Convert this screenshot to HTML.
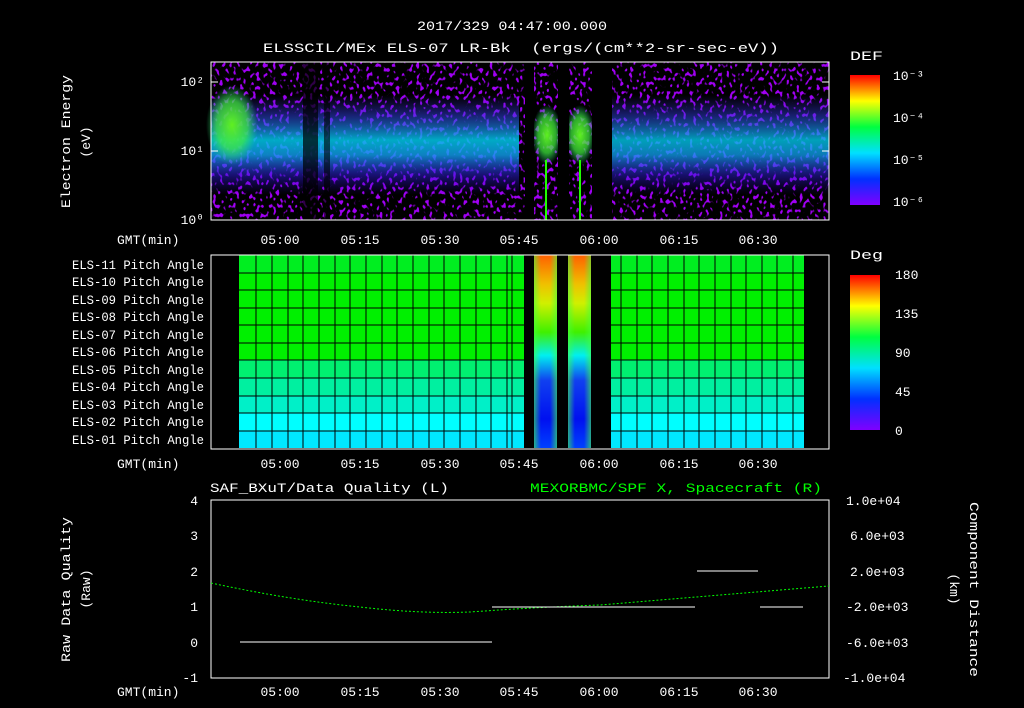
<!DOCTYPE html>
<html><head><meta charset="utf-8"><style>
html,body{margin:0;padding:0;background:#000;}
svg{display:block}
text{font-family:"Liberation Mono","DejaVu Sans Mono",monospace;fill:#fff;font-size:13px}
</style></head><body>
<svg width="1024" height="708" viewBox="0 0 1024 708" xmlns="http://www.w3.org/2000/svg">
<defs>
<linearGradient id="band" x1="0" y1="0" x2="0" y2="1">
<stop offset="0" stop-color="#4020d0" stop-opacity="0"/>
<stop offset="0.2" stop-color="#3040e0" stop-opacity="0.6"/>
<stop offset="0.45" stop-color="#00c8e8"/>
<stop offset="0.6" stop-color="#10a0f0" stop-opacity="0.95"/>
<stop offset="0.8" stop-color="#3020e0" stop-opacity="0.6"/>
<stop offset="1" stop-color="#3000c0" stop-opacity="0"/>
</linearGradient>
<linearGradient id="def" x1="0" y1="1" x2="0" y2="0">
<stop offset="0" stop-color="#8000ff"/><stop offset="0.2" stop-color="#0030ff"/>
<stop offset="0.4" stop-color="#00e0ff"/><stop offset="0.6" stop-color="#00ff40"/>
<stop offset="0.8" stop-color="#ffff00"/><stop offset="1" stop-color="#ff0000"/>
</linearGradient>
<linearGradient id="gapc" x1="0" y1="0" x2="0" y2="1">
<stop offset="0" stop-color="#ff6000"/><stop offset="0.15" stop-color="#f0c000"/><stop offset="0.25" stop-color="#d0f000"/>
<stop offset="0.4" stop-color="#40f000"/><stop offset="0.52" stop-color="#00f0f0"/>
<stop offset="0.65" stop-color="#1040f0"/><stop offset="0.85" stop-color="#0010f0"/>
<stop offset="1" stop-color="#0040ff"/>
</linearGradient>
<linearGradient id="gaph" x1="0" y1="0" x2="1" y2="0">
<stop offset="0" stop-color="#40ff40" stop-opacity="0.6"/><stop offset="0.3" stop-color="#40ff40" stop-opacity="0"/>
<stop offset="0.7" stop-color="#40ff40" stop-opacity="0"/><stop offset="1" stop-color="#40ff40" stop-opacity="0.6"/>
</linearGradient>
<radialGradient id="blob"><stop offset="0" stop-color="#60f020" stop-opacity="1"/><stop offset="0.6" stop-color="#40f040" stop-opacity="0.7"/><stop offset="1" stop-color="#20e080" stop-opacity="0"/></radialGradient>
<filter id="noise" x="0" y="0" width="100%" height="100%">
<feTurbulence type="fractalNoise" baseFrequency="0.3 0.22" numOctaves="1" seed="5"/>
<feColorMatrix type="matrix" values="0 0 0 0 0.35  0 0 0 0 0.0  0 0 0 0 0.9  0 0 0 10 -5.6"/>
</filter>
</defs>

<text x="417" y="30" font-size="16" textLength="190" lengthAdjust="spacingAndGlyphs">2017/329 04:47:00.000</text>
<text x="263" y="52" font-size="16" textLength="516" lengthAdjust="spacingAndGlyphs" xml:space="preserve">ELSSCIL/MEx ELS-07 LR-Bk  (ergs/(cm**2-sr-sec-eV))</text>

<rect x="211" y="62" width="618" height="158" filter="url(#noise)"/>
<rect x="211" y="95" width="308" height="100" fill="url(#band)" opacity="0.85"/>
<rect x="612" y="95" width="217" height="100" fill="url(#band)" opacity="0.8"/>
<ellipse cx="232" cy="125" rx="26" ry="40" fill="url(#blob)"/>
<ellipse cx="547" cy="135" rx="15" ry="30" fill="url(#blob)"/>
<ellipse cx="580" cy="135" rx="15" ry="30" fill="url(#blob)"/>
<rect x="545" y="160" width="2" height="60" fill="#20ff00"/>
<rect x="579" y="160" width="2" height="60" fill="#20ff00"/>
<rect x="303" y="62" width="15" height="158" fill="#000" opacity="0.7"/>
<rect x="324" y="62" width="6" height="158" fill="#000" opacity="0.6"/>
<rect x="525" y="62" width="9" height="158" fill="#000"/>
<rect x="558" y="62" width="11" height="158" fill="#000"/>
<rect x="592" y="62" width="20" height="158" fill="#000"/>
<rect x="211" y="62" width="618" height="158" fill="none" stroke="#fff"/>
<g stroke="#fff">
<line x1="211" y1="82" x2="218" y2="82"/><line x1="211" y1="151" x2="218" y2="151"/>
<line x1="822" y1="82" x2="829" y2="82"/><line x1="822" y1="151" x2="829" y2="151"/>
</g>
<text x="204" y="86" text-anchor="end" font-size="12">10²</text>
<text x="204" y="155" text-anchor="end" font-size="12">10¹</text>
<text x="204" y="224" text-anchor="end" font-size="12">10⁰</text>
<text transform="translate(70,208) rotate(-90)" font-size="15" textLength="133" lengthAdjust="spacingAndGlyphs">Electron Energy</text>
<text transform="translate(90,142) rotate(-90)" text-anchor="middle" font-size="15">(eV)</text>
<g text-anchor="middle">
<text x="280" y="244">05:00</text><text x="360" y="244">05:15</text><text x="440" y="244">05:30</text>
<text x="519" y="244">05:45</text><text x="599" y="244">06:00</text><text x="679" y="244">06:15</text><text x="758" y="244">06:30</text>
</g>
<text x="117" y="244" font-size="12">GMT(min)</text>
<text x="850" y="60" font-size="16" textLength="33" lengthAdjust="spacingAndGlyphs">DEF</text>
<rect x="850" y="75" width="30" height="130" fill="url(#def)"/>
<text x="893" y="80" font-size="15">10⁻³</text><text x="893" y="122" font-size="15">10⁻⁴</text>
<text x="893" y="164" font-size="15">10⁻⁵</text><text x="893" y="206" font-size="15">10⁻⁶</text>

<rect x="239" y="255" width="565" height="193" fill="#00f000"/>
<rect x="239" y="255" width="565" height="18" fill="#00ee20"/>
<rect x="239" y="360" width="565" height="18" fill="#00f070"/>
<rect x="239" y="378" width="565" height="18" fill="#00f0a0"/>
<rect x="239" y="396" width="565" height="17" fill="#00f0c8"/>
<rect x="239" y="413" width="565" height="18" fill="#00ffff"/>
<rect x="239" y="431" width="565" height="17" fill="#00e8ff"/>
<g stroke="#000" stroke-width="1">
<line x1="239" y1="273" x2="804" y2="273"/><line x1="239" y1="290" x2="804" y2="290"/>
<line x1="239" y1="308" x2="804" y2="308"/><line x1="239" y1="325" x2="804" y2="325"/>
<line x1="239" y1="343" x2="804" y2="343"/><line x1="239" y1="360" x2="804" y2="360"/>
<line x1="239" y1="378" x2="804" y2="378"/><line x1="239" y1="396" x2="804" y2="396"/>
<line x1="239" y1="413" x2="804" y2="413"/><line x1="239" y1="431" x2="804" y2="431"/>
<line x1="256" y1="255" x2="256" y2="448"/><line x1="272" y1="255" x2="272" y2="448"/><line x1="288" y1="255" x2="288" y2="448"/>
<line x1="303" y1="255" x2="303" y2="448"/><line x1="319" y1="255" x2="319" y2="448"/><line x1="335" y1="255" x2="335" y2="448"/>
<line x1="350" y1="255" x2="350" y2="448"/><line x1="366" y1="255" x2="366" y2="448"/><line x1="382" y1="255" x2="382" y2="448"/>
<line x1="397" y1="255" x2="397" y2="448"/><line x1="413" y1="255" x2="413" y2="448"/><line x1="429" y1="255" x2="429" y2="448"/>
<line x1="444" y1="255" x2="444" y2="448"/><line x1="460" y1="255" x2="460" y2="448"/><line x1="476" y1="255" x2="476" y2="448"/>
<line x1="491" y1="255" x2="491" y2="448"/><line x1="507" y1="255" x2="507" y2="448"/><line x1="512" y1="255" x2="512" y2="448"/>
<line x1="621" y1="255" x2="621" y2="448"/><line x1="637" y1="255" x2="637" y2="448"/><line x1="652" y1="255" x2="652" y2="448"/>
<line x1="668" y1="255" x2="668" y2="448"/><line x1="684" y1="255" x2="684" y2="448"/><line x1="699" y1="255" x2="699" y2="448"/>
<line x1="715" y1="255" x2="715" y2="448"/><line x1="731" y1="255" x2="731" y2="448"/><line x1="746" y1="255" x2="746" y2="448"/>
<line x1="762" y1="255" x2="762" y2="448"/><line x1="777" y1="255" x2="777" y2="448"/><line x1="793" y1="255" x2="793" y2="448"/>
</g>
<rect x="534" y="255" width="23" height="193" fill="url(#gapc)"/>
<rect x="534" y="255" width="23" height="193" fill="url(#gaph)"/>
<rect x="568" y="255" width="23" height="193" fill="url(#gapc)"/>
<rect x="568" y="255" width="23" height="193" fill="url(#gaph)"/>
<rect x="524" y="255" width="10" height="193" fill="#000"/>
<rect x="557" y="255" width="11" height="193" fill="#000"/>
<rect x="591" y="255" width="20" height="193" fill="#000"/>
<rect x="211" y="255" width="618" height="194" fill="none" stroke="#fff"/>
<g font-size="12">
<text x="72" y="269" textLength="132" lengthAdjust="spacingAndGlyphs">ELS-11 Pitch Angle</text>
<text x="72" y="286" textLength="132" lengthAdjust="spacingAndGlyphs">ELS-10 Pitch Angle</text>
<text x="72" y="304" textLength="132" lengthAdjust="spacingAndGlyphs">ELS-09 Pitch Angle</text>
<text x="72" y="321" textLength="132" lengthAdjust="spacingAndGlyphs">ELS-08 Pitch Angle</text>
<text x="72" y="339" textLength="132" lengthAdjust="spacingAndGlyphs">ELS-07 Pitch Angle</text>
<text x="72" y="356" textLength="132" lengthAdjust="spacingAndGlyphs">ELS-06 Pitch Angle</text>
<text x="72" y="374" textLength="132" lengthAdjust="spacingAndGlyphs">ELS-05 Pitch Angle</text>
<text x="72" y="391" textLength="132" lengthAdjust="spacingAndGlyphs">ELS-04 Pitch Angle</text>
<text x="72" y="409" textLength="132" lengthAdjust="spacingAndGlyphs">ELS-03 Pitch Angle</text>
<text x="72" y="426" textLength="132" lengthAdjust="spacingAndGlyphs">ELS-02 Pitch Angle</text>
<text x="72" y="444" textLength="132" lengthAdjust="spacingAndGlyphs">ELS-01 Pitch Angle</text>
</g>
<g text-anchor="middle">
<text x="280" y="468">05:00</text><text x="360" y="468">05:15</text><text x="440" y="468">05:30</text>
<text x="519" y="468">05:45</text><text x="599" y="468">06:00</text><text x="679" y="468">06:15</text><text x="758" y="468">06:30</text>
</g>
<text x="117" y="468" font-size="12">GMT(min)</text>
<text x="850" y="259" font-size="16" textLength="33" lengthAdjust="spacingAndGlyphs">Deg</text>
<rect x="850" y="275" width="30" height="155" fill="url(#def)"/>
<text x="895" y="279" font-size="16">180</text><text x="895" y="318" font-size="16">135</text>
<text x="895" y="357" font-size="16">90</text><text x="895" y="396" font-size="16">45</text><text x="895" y="435" font-size="16">0</text>

<text x="210" y="492" font-size="16" textLength="239" lengthAdjust="spacingAndGlyphs">SAF_BXuT/Data Quality (L)</text>
<text x="530" y="492" font-size="16" textLength="292" lengthAdjust="spacingAndGlyphs" style="fill:#00ff00">MEXORBMC/SPF X, Spacecraft (R)</text>
<rect x="211" y="500" width="618" height="178" fill="none" stroke="#fff"/>
<g text-anchor="end">
<text x="198" y="505">4</text><text x="198" y="540">3</text><text x="198" y="576">2</text>
<text x="198" y="611">1</text><text x="198" y="647">0</text><text x="198" y="682">-1</text>
</g>
<g font-size="12">
<text x="846" y="505">1.0e+04</text><text x="850" y="540">6.0e+03</text><text x="850" y="576">2.0e+03</text>
<text x="846" y="611">-2.0e+03</text><text x="846" y="647">-6.0e+03</text><text x="843" y="682">-1.0e+04</text>
</g>
<text transform="translate(70,662) rotate(-90)" font-size="15" textLength="145" lengthAdjust="spacingAndGlyphs">Raw Data Quality</text>
<text transform="translate(90,589) rotate(-90)" text-anchor="middle" font-size="15">(Raw)</text>
<text transform="translate(970,502) rotate(90)" font-size="15" textLength="175" lengthAdjust="spacingAndGlyphs">Component Distance</text>
<text transform="translate(950,589) rotate(90)" text-anchor="middle" font-size="15">(km)</text>
<path d="M211,583 Q290,600 360,607 Q420,614 470,612 Q540,607 600,605 Q720,595 829,586" fill="none" stroke="#00ff00" stroke-dasharray="2,2"/>
<g stroke="#fff">
<line x1="240" y1="642" x2="492" y2="642"/><line x1="492" y1="607" x2="695" y2="607"/>
<line x1="697" y1="571" x2="758" y2="571"/><line x1="760" y1="607" x2="803" y2="607"/>
</g>
<g text-anchor="middle">
<text x="280" y="696">05:00</text><text x="360" y="696">05:15</text><text x="440" y="696">05:30</text>
<text x="519" y="696">05:45</text><text x="599" y="696">06:00</text><text x="679" y="696">06:15</text><text x="758" y="696">06:30</text>
</g>
<text x="117" y="696" font-size="12">GMT(min)</text>
</svg>
</body></html>
